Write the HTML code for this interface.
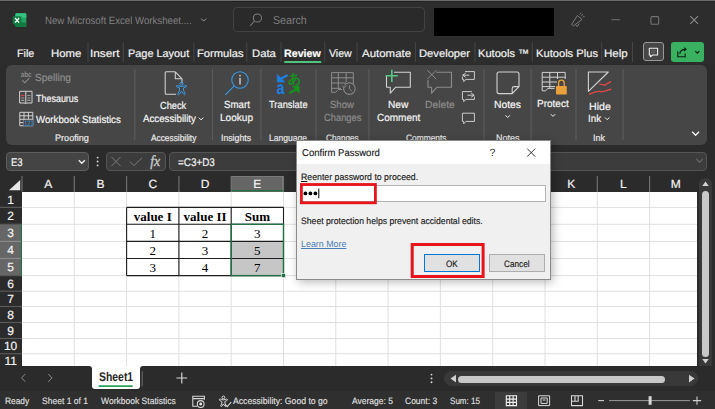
<!DOCTYPE html><html><head><meta charset="utf-8"><style>*{margin:0;padding:0;box-sizing:border-box}html,body{width:715px;height:409px;overflow:hidden;background:#2b2b2b}.a{position:absolute;white-space:nowrap}</style></head><body>
<div class="a" style="left:0px;top:0px;width:715px;height:64px;background:#2d2d2d;"></div>
<div class="a" style="left:0px;top:0px;width:715px;height:1px;background:#6b6b6b;"></div>
<div class="a" style="left:0px;top:1px;width:715px;height:1px;background:#222;"></div>
<div class="a" style="left:233px;top:7px;width:192px;height:25px;background:#2a2a2a;border:1px solid #424242;border-radius:4px"></div>
<div class="a" style="left:434px;top:8px;width:120px;height:28px;background:#000;"></div>
<div class="a" style="left:643px;top:42px;width:21.2px;height:19.4px;background:#474747;border:1px solid #9a9a9a;border-radius:3px"></div>
<div class="a" style="left:670.5px;top:42.2px;width:33.7px;height:20px;background:#3ab061;border-radius:3px"></div>
<div class="a" style="left:6px;top:65px;width:701px;height:80px;background:#464646;border-radius:6px"></div>
<div class="a" style="left:6.2px;top:151.5px;width:83.3px;height:19.3px;background:#444;border:1px solid #5e5e5e;border-radius:4px"></div>
<div class="a" style="left:106.4px;top:151.5px;width:59.5px;height:19.3px;background:#3c3c3c;border:1px solid #555;border-radius:4px"></div>
<div class="a" style="left:169.4px;top:151.5px;width:537.6px;height:19.3px;background:#3c3c3c;border:1px solid #555;border-radius:4px"></div>
<div class="a" style="left:0px;top:176px;width:697px;height:15.5px;background:#2b2b2b;"></div>
<div class="a" style="left:231.2px;top:176px;width:52.3px;height:15.5px;background:#666;border:1px solid #7a7a7a;border-bottom:none"></div>
<div class="a" style="left:22px;top:191.5px;width:675px;height:175px;background:#fff;"></div>
<div class="a" style="left:697px;top:176px;width:18px;height:190px;background:#2b2b2b;"></div>
<div class="a" style="left:699px;top:178px;width:13px;height:188px;background:#393939;border-radius:6px 6px 0 0"></div>
<div class="a" style="left:701.8px;top:190.5px;width:7.5px;height:166px;background:#c8c8c8;border-radius:4px"></div>
<div class="a" style="left:0px;top:366px;width:715px;height:25.4px;background:#2b2b2b;"></div>
<div class="a" style="left:85px;top:366px;width:60px;height:4px;background:#fff;"></div>
<div class="a" style="left:0px;top:366px;width:91.75px;height:25.4px;background:#2b2b2b;border-top-right-radius:3px"></div>
<div class="a" style="left:139.7px;top:366px;width:575.3px;height:25.4px;background:#2b2b2b;border-top-left-radius:3px"></div>
<div class="a" style="left:91.75px;top:366px;width:47.95px;height:22.9px;background:#fff;border-radius:0 0 3px 3px"></div>
<div class="a" style="left:0px;top:391.4px;width:715px;height:17.6px;background:#2f2f2f;"></div>
<div class="a" style="left:444px;top:371px;width:254px;height:15px;background:#393939;border-radius:7.5px"></div>
<div class="a" style="left:458px;top:375.5px;width:207px;height:7px;background:#c8c8c8;border-radius:3.5px"></div>
<div class="a" style="left:494.8px;top:392px;width:32.7px;height:17px;background:#3c3c3c;"></div>
<svg class="a" style="left:0;top:0" width="715" height="409" viewBox="0 0 715 409" fill="none"><rect x="15.4" y="13.2" width="10.9" height="13.8" rx="1.3" fill="#21a366"/><path d="M15.4 14.5 A1.3 1.3 0 0 1 16.7 13.2 H25 A1.3 1.3 0 0 1 26.3 14.5 V17.8 H15.4 Z" fill="#33c481"/><path d="M15.4 22.4 H26.3 V25.7 A1.3 1.3 0 0 1 25 27 H16.7 A1.3 1.3 0 0 1 15.4 25.7 Z" fill="#107c41"/><rect x="12.8" y="16.2" width="8.6" height="8.2" rx="1" fill="#107c41"/><path d="M15.1 18 L19.1 22.6 M19.1 18 L15.1 22.6" stroke="#fff" stroke-width="1.3"/><path d="M201.2 18.6 L203.7 21.1 L206.2 18.6" stroke="#9a9a9a" stroke-width="1"/><circle cx="257.4" cy="18" r="4.1" stroke="#7a7a7a" stroke-width="1.05"/><path d="M254.5 21 L250.2 25.8" stroke="#7a7a7a" stroke-width="1.1"/><path d="M571.5 24.5 L577.5 15.5 L582 19.5 L573.5 25.8 Z M575.7 24.7 L577.2 26.6 L579.2 23.6" stroke="#7a7a7a" stroke-width="1" stroke-linejoin="round"/><path d="M579.6 14.4 L581.4 12.6 M582.4 17.2 L584.6 16.6 M581.2 15.6 L583.2 14.4" stroke="#7a7a7a" stroke-width="0.9"/><path d="M611.4 19.7 H620" stroke="#6a6a6a" stroke-width="1.1"/><rect x="650.9" y="16.6" width="7.8" height="7.6" rx="1.3" stroke="#747474" stroke-width="1.1"/><path d="M690.3 16.2 L698 23.9 M698 16.2 L690.3 23.9" stroke="#8c8c8c" stroke-width="1.05"/><path d="M88.0 42 V62" stroke="#464646" stroke-width="1"/><path d="M123.3 42 V62" stroke="#464646" stroke-width="1"/><path d="M193.9 42 V62" stroke="#464646" stroke-width="1"/><path d="M246.8 42 V62" stroke="#464646" stroke-width="1"/><path d="M281.0 42 V62" stroke="#464646" stroke-width="1"/><path d="M324.7 42 V62" stroke="#464646" stroke-width="1"/><path d="M357.0 42 V62" stroke="#464646" stroke-width="1"/><path d="M415.4 42 V62" stroke="#464646" stroke-width="1"/><path d="M475.0 42 V62" stroke="#464646" stroke-width="1"/><path d="M532.3 42 V62" stroke="#464646" stroke-width="1"/><path d="M601.7 42 V62" stroke="#464646" stroke-width="1"/><path d="M632.5 42 V62" stroke="#464646" stroke-width="1"/><path d="M285 62 H320.5" stroke="#4fc27d" stroke-width="2" stroke-linecap="round"/><path d="M649.3 48.2 H657.6 V55 H652.6 L650.4 56.8 V55 H649.3 Z" stroke="#f0f0f0" stroke-width="1.05" stroke-linejoin="round"/><path d="M651 50.8 H656 M651 52.6 H655" stroke="#777" stroke-width="0.6"/><path d="M677.8 51.3 V56.7 H685.2 V53.6" stroke="#0d1f12" stroke-width="1.15"/><path d="M679.8 54 C680 50.8 682 49.3 685.5 49.3 M684 47.6 L686 49.3 L684 51" stroke="#0d1f12" stroke-width="1.15"/><path d="M695.3 51.2 L697.3 53.2 L699.3 51.2" stroke="#0d1f12" stroke-width="1.2"/><path d="M134.8 69 V140" stroke="#5e5e5e" stroke-width="1"/><path d="M212.4 69 V140" stroke="#5e5e5e" stroke-width="1"/><path d="M261.0 69 V140" stroke="#5e5e5e" stroke-width="1"/><path d="M316.0 69 V140" stroke="#5e5e5e" stroke-width="1"/><path d="M369.0 69 V140" stroke="#5e5e5e" stroke-width="1"/><path d="M484.0 69 V140" stroke="#5e5e5e" stroke-width="1"/><path d="M531.0 69 V140" stroke="#5e5e5e" stroke-width="1"/><path d="M576.0 69 V140" stroke="#5e5e5e" stroke-width="1"/><path d="M623.0 69 V140" stroke="#5e5e5e" stroke-width="1"/><text transform="translate(20.8 76.6) scale(0.8 1)" font-family="Liberation Sans" font-weight="bold" font-size="7.8" fill="#8c8c8c" text-rendering="geometricPrecision">abc</text><path d="M22.3 80.2 L24.7 82.8 L29.3 78.2" stroke="#8c8c8c" stroke-width="1.05"/><path d="M19.6 91.3 H32 V103 H26.6 L25.8 103.9 L25 103 H19.6 Z M25.8 91.3 V103" stroke="#d2d2d2" stroke-width="1" stroke-linejoin="round"/><path d="M21.2 95.5 H24.3" stroke="#e04848" stroke-width="1.3"/><path d="M21.2 98 H24.3 M21.2 100.4 H24.3 M27.3 95.5 H30.4 M27.3 98 H30.4 M27.3 100.4 H30.4" stroke="#9a9a9a" stroke-width="1.1"/><path d="M19.8 112.3 H32.8 V125.8 H19.8 Z M19.8 115.8 H32.8 M19.8 119.3 H32.8 M19.8 122.6 H23.5 M24 112.3 V125.8 M28.4 112.3 V119.3" stroke="#d2d2d2" stroke-width="1"/><rect x="23.6" y="119.9" width="9.6" height="6.2" fill="#464646"/><text transform="translate(24.2 126) scale(0.7 1)" font-family="Liberation Sans" font-size="8" fill="#3a9be6" text-rendering="geometricPrecision">123</text><path d="M175.3 71.8 H166.2 A1 1 0 0 0 165.2 72.8 V93.3 A1 1 0 0 0 166.2 94.3 H176 M175.3 71.8 L182 78.8 V83.5 M175.3 71.8 V78.8 H182" stroke="#d2d2d2" stroke-width="1.05" stroke-linejoin="round"/><circle cx="181.5" cy="83.7" r="1.6" stroke="#3a9be6" stroke-width="1"/><path d="M176.5 86.6 C176.1 85.7 176.8 85.3 177.6 85.6 L180.2 86.4 H182.8 L185.4 85.6 C186.2 85.3 186.9 85.7 186.5 86.6 L183.5 88 V90.4 L185.2 93.8 C185.5 94.7 184.5 95.2 184 94.5 L181.5 91.4 L179 94.5 C178.5 95.2 177.5 94.7 177.8 93.8 L179.5 90.4 V88 Z" stroke="#3a9be6" stroke-width="1" stroke-linejoin="round"/><circle cx="240" cy="80" r="8.2" stroke="#3a9be6" stroke-width="1.05"/><path d="M234.3 85.8 L225.3 94.8" stroke="#3a9be6" stroke-width="1.1"/><circle cx="240" cy="75.6" r="0.9" fill="#c8c8c8"/><path d="M240 77.8 V84.5" stroke="#c8c8c8" stroke-width="1.5"/><path d="M277.2 74.4 V82 H284.8 Z" fill="#1e7fe0" stroke="#1e7fe0" stroke-width="0.6" stroke-linejoin="round"/><path d="M279.6 79.6 L286.8 75.6" stroke="#1e7fe0" stroke-width="2.3" stroke-linecap="round"/><text transform="translate(276.4 94.2) scale(0.8 1)" x="0" y="0" font-family="Liberation Sans" font-weight="bold" font-size="18" fill="#1e7fe0" text-rendering="geometricPrecision">a</text><text x="287.6" y="82.8" font-family="Liberation Sans" font-weight="bold" font-size="12.8" fill="#16911e">あ</text><path d="M292.2 86.1 H299.2 V93.3 Z" fill="#16911e" stroke="#16911e" stroke-width="0.6" stroke-linejoin="round"/><path d="M296.2 89.4 L290.4 92.6" stroke="#16911e" stroke-width="2.3" stroke-linecap="round"/><path d="M331.6 92.3 V72.6 H353.3 V84 M331.6 77.8 H353.3 M331.6 83 H346 M331.6 88.3 H341 M338.3 72.6 V89 M346.2 72.6 V82 M331.6 92.3 H335.5 L338.5 89.5 H342" stroke="#8c8c8c" stroke-width="1"/><circle cx="349.4" cy="88.6" r="5.8" stroke="#8c8c8c" stroke-width="1.05" fill="#464646"/><path d="M349.4 85.3 V88.8 L351.9 91.2" stroke="#8c8c8c" stroke-width="1"/><path d="M342.2 85.5 L344.2 87.8 L346.2 85.5" stroke="#8c8c8c" stroke-width="1" fill="#464646"/><path d="M386.5 75.6 V87.2 H390.3 V93.2 L395.8 87.2 H410.3 V72.2 H394" stroke="#d2d2d2" stroke-width="1.1" stroke-linejoin="round"/><path d="M391.8 69.8 V82 M385.6 75.8 H397.8" stroke="#56c785" stroke-width="1.6"/><path d="M428 80 V87.2 H431.6 V93.2 L437 87.2 H451.5 V72.2 H436.5" stroke="#8c8c8c" stroke-width="1.1" stroke-linejoin="round"/><path d="M427.3 70.2 L436.3 79.2 M436.3 70.2 L427.3 79.2" stroke="#8c8c8c" stroke-width="1"/><path d="M465 71.6 H474.4 V79.4 H466 L463.7 81.6 V79.4 H462.4 V76.6" stroke="#d2d2d2" stroke-width="0.95" stroke-linejoin="round"/><path d="M465.6 73.2 L462.6 75.2 L465.6 77.2 M462.8 75.2 H469.4" stroke="#d2d2d2" stroke-width="0.95"/><path d="M471.8 91.6 H462.4 V99.4 H463.7 V101.6 L466 99.4 H474.4 V96.6" stroke="#d2d2d2" stroke-width="0.95" stroke-linejoin="round"/><path d="M471.2 93.2 L474.2 95.2 L471.2 97.2 M474 95.2 H467.4" stroke="#d2d2d2" stroke-width="0.95"/><path d="M462.4 113.2 H474.4 V121.4 H466 L463.7 123.8 V121.4 H462.4 Z" stroke="#d2d2d2" stroke-width="0.95" stroke-linejoin="round"/><path d="M499 72 H517 A2 2 0 0 1 519 74 V86.6 L512.2 93.6 H499 A2 2 0 0 1 497 91.6 V74 A2 2 0 0 1 499 72 Z M519 86.6 H514 A1.8 1.8 0 0 0 512.2 88.4 V93.6" stroke="#d2d2d2" stroke-width="1.1" stroke-linejoin="round"/><path d="M542.2 90.8 V72.4 H565.2 V79 M542.2 77.2 H565.2 M542.2 82 H557 M542.2 86.6 H555 M549.8 72.4 V88 M557.5 72.4 V79 M542.2 90.8 H545.5 L548 88.4 H554.5" stroke="#d2d2d2" stroke-width="1"/><path d="M558.6 86.2 V83 A2.8 2.8 0 0 1 564.2 83 V86.2" stroke="#e9a23b" stroke-width="1.3" fill="#464646"/><rect x="556" y="86" width="10.8" height="8.6" rx="0.8" fill="#e9a23b"/><path d="M588.4 72 H608.3 L588.4 91.3 Z" stroke="#d2d2d2" stroke-width="1.1" stroke-linejoin="round"/><path d="M599.4 84.2 C602 83.5 603.5 85.8 605.5 84.8 C607.5 83.8 609 82.3 611.2 81.6 M589 94.2 C593.5 92.5 597.6 90.6 600.4 91.6 C603 92.6 606.5 90.2 611.2 89.2" stroke="#e04848" stroke-width="1.4"/><path d="M198.9 117.7 L201.1 119.9 L203.3 117.7" stroke="#f0f0f0" stroke-width="1"/><path d="M505.5 115.3 L507.7 117.5 L509.9 115.3" stroke="#f0f0f0" stroke-width="1"/><path d="M550.8 114.2 L553.0 116.4 L555.2 114.2" stroke="#f0f0f0" stroke-width="1"/><path d="M605.0 117.5 L607.2 119.7 L609.4 117.5" stroke="#f0f0f0" stroke-width="1"/><path d="M692.2 131.8 L695.6 135.2 L699 131.8" stroke="#f4f4f4" stroke-width="1.4"/><path d="M78.8 160.2 L81.8 163.2 L84.8 160.2" stroke="#f0f0f0" stroke-width="1.4"/><circle cx="97.6" cy="157.6" r="0.95" fill="#d8d8d8"/><circle cx="97.6" cy="161.5" r="0.95" fill="#d8d8d8"/><circle cx="97.6" cy="165.4" r="0.95" fill="#d8d8d8"/><path d="M111.5 157 L120.5 166 M120.5 157 L111.5 166" stroke="#7a7a7a" stroke-width="1"/><path d="M129.8 161.6 L134 165.6 L142 157.8" stroke="#7a7a7a" stroke-width="1"/><path d="M696.2 158.8 L699.6 162.2 L703 158.8" stroke="#6a6a6a" stroke-width="1.1"/><rect x="0" y="224.3" width="22" height="51.30000000000001" fill="#666"/><path d="M74.30 191.5 V366" stroke="#e0e0e0" stroke-width="1"/><path d="M74.30 176 V191.5" stroke="#6e6e6e" stroke-width="1.2"/><path d="M126.60 191.5 V366" stroke="#e0e0e0" stroke-width="1"/><path d="M126.60 176 V191.5" stroke="#6e6e6e" stroke-width="1.2"/><path d="M178.90 191.5 V366" stroke="#e0e0e0" stroke-width="1"/><path d="M178.90 176 V191.5" stroke="#6e6e6e" stroke-width="1.2"/><path d="M231.20 191.5 V366" stroke="#e0e0e0" stroke-width="1"/><path d="M231.20 176 V191.5" stroke="#6e6e6e" stroke-width="1.2"/><path d="M283.50 191.5 V366" stroke="#e0e0e0" stroke-width="1"/><path d="M283.50 176 V191.5" stroke="#6e6e6e" stroke-width="1.2"/><path d="M335.80 191.5 V366" stroke="#e0e0e0" stroke-width="1"/><path d="M335.80 176 V191.5" stroke="#6e6e6e" stroke-width="1.2"/><path d="M388.10 191.5 V366" stroke="#e0e0e0" stroke-width="1"/><path d="M388.10 176 V191.5" stroke="#6e6e6e" stroke-width="1.2"/><path d="M440.40 191.5 V366" stroke="#e0e0e0" stroke-width="1"/><path d="M440.40 176 V191.5" stroke="#6e6e6e" stroke-width="1.2"/><path d="M492.70 191.5 V366" stroke="#e0e0e0" stroke-width="1"/><path d="M492.70 176 V191.5" stroke="#6e6e6e" stroke-width="1.2"/><path d="M545.00 191.5 V366" stroke="#e0e0e0" stroke-width="1"/><path d="M545.00 176 V191.5" stroke="#6e6e6e" stroke-width="1.2"/><path d="M597.30 191.5 V366" stroke="#e0e0e0" stroke-width="1"/><path d="M597.30 176 V191.5" stroke="#6e6e6e" stroke-width="1.2"/><path d="M649.60 191.5 V366" stroke="#e0e0e0" stroke-width="1"/><path d="M649.60 176 V191.5" stroke="#6e6e6e" stroke-width="1.2"/><path d="M22 176 V191.5" stroke="#6e6e6e" stroke-width="1.2"/><path d="M22 207.4 H697" stroke="#e0e0e0" stroke-width="1"/><path d="M0 207.4 H22" stroke="#595959" stroke-width="1.2"/><path d="M22 224.3 H697" stroke="#e0e0e0" stroke-width="1"/><path d="M0 224.3 H22" stroke="#595959" stroke-width="1.2"/><path d="M22 241.4 H697" stroke="#e0e0e0" stroke-width="1"/><path d="M0 241.4 H22" stroke="#8a8a8a" stroke-width="1.2"/><path d="M22 258.5 H697" stroke="#e0e0e0" stroke-width="1"/><path d="M0 258.5 H22" stroke="#8a8a8a" stroke-width="1.2"/><path d="M22 275.6 H697" stroke="#e0e0e0" stroke-width="1"/><path d="M0 275.6 H22" stroke="#595959" stroke-width="1.2"/><path d="M22 291.2 H697" stroke="#e0e0e0" stroke-width="1"/><path d="M0 291.2 H22" stroke="#595959" stroke-width="1.2"/><path d="M22 306.5 H697" stroke="#e0e0e0" stroke-width="1"/><path d="M0 306.5 H22" stroke="#595959" stroke-width="1.2"/><path d="M22 322.5 H697" stroke="#e0e0e0" stroke-width="1"/><path d="M0 322.5 H22" stroke="#595959" stroke-width="1.2"/><path d="M22 338.5 H697" stroke="#e0e0e0" stroke-width="1"/><path d="M0 338.5 H22" stroke="#595959" stroke-width="1.2"/><path d="M22 353.7 H697" stroke="#e0e0e0" stroke-width="1"/><path d="M0 353.7 H22" stroke="#595959" stroke-width="1.2"/><path d="M9 190.2 L20.2 180 V190.2 Z" fill="#e8e8e8"/><path d="M231.20 190.6 H283.50" stroke="#217346" stroke-width="1.2"/><path d="M21.4 224.3 V275.6" stroke="#217346" stroke-width="1.2"/><rect x="231.2" y="241.4" width="52.3" height="34.20000000000002" fill="#c6c6c6"/><path d="M126.60 207.4 V275.6" stroke="#1e1e1e" stroke-width="1.1"/><path d="M178.90 207.4 V275.6" stroke="#1e1e1e" stroke-width="1.1"/><path d="M231.20 207.4 V275.6" stroke="#1e1e1e" stroke-width="1.1"/><path d="M283.50 207.4 V275.6" stroke="#1e1e1e" stroke-width="1.1"/><path d="M126.60 207.4 H283.50" stroke="#1e1e1e" stroke-width="1.1"/><path d="M126.60 224.3 H283.50" stroke="#1e1e1e" stroke-width="1.1"/><path d="M126.60 241.4 H283.50" stroke="#1e1e1e" stroke-width="1.1"/><path d="M126.60 258.5 H283.50" stroke="#1e1e1e" stroke-width="1.1"/><path d="M126.60 275.6 H283.50" stroke="#1e1e1e" stroke-width="1.1"/><rect x="231.2" y="224.3" width="52.3" height="51.30000000000001" stroke="#217346" stroke-width="1.4"/><rect x="281.5" y="273.6" width="4" height="4" fill="#217346" stroke="#fff" stroke-width="0.6"/><path d="M702.2 186 L705.5 181.6 L708.8 186 Z" fill="#d0d0d0"/><path d="M702.2 359 L705.5 363.4 L708.8 359 Z" fill="#d0d0d0"/><path d="M25.3 374 L21.6 377.9 L25.3 381.8 M48.3 374 L52 377.9 L48.3 381.8" stroke="#8a8a8a" stroke-width="1"/><path d="M99.3 386.2 H132 " stroke="#2e9e5b" stroke-width="1.8" stroke-linecap="round"/><path d="M142.2 371.3 V386.4" stroke="#6e6e6e" stroke-width="1"/><path d="M181.8 372.6 V383.4 M176.4 378 H187.2" stroke="#d8d8d8" stroke-width="1.15"/><circle cx="431.5" cy="374.6" r="0.95" fill="#d8d8d8"/><circle cx="431.5" cy="378.4" r="0.95" fill="#d8d8d8"/><circle cx="431.5" cy="382.2" r="0.95" fill="#d8d8d8"/><path d="M456 374.8 L450.5 378.6 L456 382.4 Z" fill="#d0d0d0"/><path d="M689 374.8 L694.5 378.6 L689 382.4 Z" fill="#d0d0d0"/><path d="M197 406.3 H192.8 V396.3 H204.4 V399.8 M192.8 398.6 H204.4" stroke="#d8d8d8" stroke-width="1.05"/><circle cx="200.7" cy="404" r="3.4" stroke="#d8d8d8" stroke-width="1.05" fill="#2f2f2f"/><circle cx="200.7" cy="404" r="1.4" fill="#ececec"/><circle cx="223.4" cy="397.4" r="1.4" stroke="#d8d8d8" stroke-width="1"/><path d="M219.2 399.6 C219.6 398.6 220.8 399.3 223.4 399.9 C226 399.3 227.2 398.6 227.6 399.6 C227.8 400.3 226.2 400.9 224.9 401.4 V403 L226 405.6 C226.3 406.5 225.3 406.9 224.8 406.1 L223.4 403.9 L222 406.1 C221.5 406.9 220.5 406.5 220.8 405.6 L221.9 403 V401.4 C220.6 400.9 219 400.3 219.2 399.6 Z" stroke="#d8d8d8" stroke-width="1" stroke-linejoin="round"/><path d="M225.4 404.6 L227.2 406.6 L231.2 402.2" stroke="#d8d8d8" stroke-width="1.05"/><path d="M506.3 395.8 H516.5 V405.6 H506.3 Z M506.3 399.1 H516.5 M506.3 402.4 H516.5 M509.7 395.8 V405.6 M513.1 395.8 V405.6" stroke="#f0f0f0" stroke-width="1.1"/><path d="M538.6 395.8 H549.6 V405.6 H538.6 Z M541 398 H547.2 V403.4 H541 Z M542.6 400 H545.6" stroke="#d8d8d8" stroke-width="1"/><path d="M571.5 395.8 H582.5 V405.6 H571.5 Z M571.5 401.2 H578.2 V395.8 M575 395.8 V401.2" stroke="#d8d8d8" stroke-width="1.1"/><path d="M598.2 400.6 H604" stroke="#d0d0d0" stroke-width="1.1"/><path d="M609 400.6 H690" stroke="#9a9a9a" stroke-width="1"/><rect x="648.6" y="396.2" width="3" height="8.6" fill="#d8d8d8"/><path d="M697 396.4 V404.8 M692.8 400.6 H701.2" stroke="#d0d0d0" stroke-width="1.05"/></svg>
<div class="a" style="left:45.21px;top:15px;font:normal 10.5px/12.600px 'Liberation Sans',sans-serif;color:#808080;text-rendering:geometricPrecision;transform:scaleX(0.9185);transform-origin:0 0;">New Microsoft Excel Worksheet....</div>
<div class="a" style="left:273.12px;top:15px;font:normal 11.5px/13.800px 'Liberation Sans',sans-serif;color:#7e7e7e;text-rendering:geometricPrecision;transform:scaleX(0.9267);transform-origin:0 0;">Search</div>
<div class="a" style="left:16.92px;top:48px;font:normal 10.9px/13.080px 'Liberation Sans',sans-serif;color:#f2f2f2;text-rendering:geometricPrecision;-webkit-text-stroke:0.2px #f2f2f2;transform:scaleX(0.9823);transform-origin:0 0;">File</div>
<div class="a" style="left:51.06px;top:48px;font:normal 10.9px/13.080px 'Liberation Sans',sans-serif;color:#f2f2f2;text-rendering:geometricPrecision;-webkit-text-stroke:0.2px #f2f2f2;transform:scaleX(1.0470);transform-origin:0 0;">Home</div>
<div class="a" style="left:89.51px;top:48px;font:normal 10.9px/13.080px 'Liberation Sans',sans-serif;color:#f2f2f2;text-rendering:geometricPrecision;-webkit-text-stroke:0.2px #f2f2f2;transform:scaleX(1.0847);transform-origin:0 0;">Insert</div>
<div class="a" style="left:127.51px;top:48px;font:normal 10.9px/13.080px 'Liberation Sans',sans-serif;color:#f2f2f2;text-rendering:geometricPrecision;-webkit-text-stroke:0.2px #f2f2f2;transform:scaleX(1.0009);transform-origin:0 0;">Page Layout</div>
<div class="a" style="left:196.98px;top:48px;font:normal 10.9px/13.080px 'Liberation Sans',sans-serif;color:#f2f2f2;text-rendering:geometricPrecision;-webkit-text-stroke:0.2px #f2f2f2;transform:scaleX(1.0262);transform-origin:0 0;">Formulas</div>
<div class="a" style="left:251.57px;top:48px;font:normal 10.9px/13.080px 'Liberation Sans',sans-serif;color:#f2f2f2;text-rendering:geometricPrecision;-webkit-text-stroke:0.2px #f2f2f2;transform:scaleX(1.0389);transform-origin:0 0;">Data</div>
<div class="a" style="left:283.70px;top:48px;font:bold 10.9px/13.080px 'Liberation Sans',sans-serif;color:#ffffff;text-rendering:geometricPrecision;-webkit-text-stroke:0.2px #ffffff;transform:scaleX(0.9793);transform-origin:0 0;">Review</div>
<div class="a" style="left:329.26px;top:48px;font:normal 10.9px/13.080px 'Liberation Sans',sans-serif;color:#f2f2f2;text-rendering:geometricPrecision;-webkit-text-stroke:0.2px #f2f2f2;transform:scaleX(0.9695);transform-origin:0 0;">View</div>
<div class="a" style="left:361.98px;top:48px;font:normal 10.9px/13.080px 'Liberation Sans',sans-serif;color:#f2f2f2;text-rendering:geometricPrecision;-webkit-text-stroke:0.2px #f2f2f2;transform:scaleX(1.0531);transform-origin:0 0;">Automate</div>
<div class="a" style="left:419.08px;top:48px;font:normal 10.9px/13.080px 'Liberation Sans',sans-serif;color:#f2f2f2;text-rendering:geometricPrecision;-webkit-text-stroke:0.2px #f2f2f2;transform:scaleX(1.0285);transform-origin:0 0;">Developer</div>
<div class="a" style="left:478.09px;top:48px;font:normal 10.9px/13.080px 'Liberation Sans',sans-serif;color:#f2f2f2;text-rendering:geometricPrecision;-webkit-text-stroke:0.2px #f2f2f2;transform:scaleX(1.0173);transform-origin:0 0;">Kutools ™</div>
<div class="a" style="left:535.59px;top:48px;font:normal 10.9px/13.080px 'Liberation Sans',sans-serif;color:#f2f2f2;text-rendering:geometricPrecision;-webkit-text-stroke:0.2px #f2f2f2;transform:scaleX(1.0235);transform-origin:0 0;">Kutools Plus</div>
<div class="a" style="left:604.05px;top:48px;font:normal 10.9px/13.080px 'Liberation Sans',sans-serif;color:#f2f2f2;text-rendering:geometricPrecision;-webkit-text-stroke:0.2px #f2f2f2;transform:scaleX(1.0626);transform-origin:0 0;">Help</div>
<div class="a" style="left:35.34px;top:73px;font:normal 10.3px/12.360px 'Liberation Sans',sans-serif;color:#8c8c8c;text-rendering:geometricPrecision;-webkit-text-stroke:0.2px #8c8c8c;transform:scaleX(0.9824);transform-origin:0 0;">Spelling</div>
<div class="a" style="left:36.30px;top:94px;font:normal 10.3px/12.360px 'Liberation Sans',sans-serif;color:#f4f4f4;text-rendering:geometricPrecision;-webkit-text-stroke:0.2px #f4f4f4;transform:scaleX(0.8696);transform-origin:0 0;">Thesaurus</div>
<div class="a" style="left:36.46px;top:115px;font:normal 10.3px/12.360px 'Liberation Sans',sans-serif;color:#f4f4f4;text-rendering:geometricPrecision;-webkit-text-stroke:0.2px #f4f4f4;transform:scaleX(0.9395);transform-origin:0 0;">Workbook Statistics</div>
<div class="a" style="left:54.95px;top:133px;font:normal 9.3px/11.160px 'Liberation Sans',sans-serif;color:#e6e6e6;text-rendering:geometricPrecision;-webkit-text-stroke:0.2px #e6e6e6;transform:scaleX(0.9797);transform-origin:0 0;">Proofing</div>
<div class="a" style="left:150.88px;top:133px;font:normal 9.3px/11.160px 'Liberation Sans',sans-serif;color:#e6e6e6;text-rendering:geometricPrecision;-webkit-text-stroke:0.2px #e6e6e6;transform:scaleX(0.8951);transform-origin:0 0;">Accessibility</div>
<div class="a" style="left:221.40px;top:133px;font:normal 9.3px/11.160px 'Liberation Sans',sans-serif;color:#e6e6e6;text-rendering:geometricPrecision;-webkit-text-stroke:0.2px #e6e6e6;transform:scaleX(0.9366);transform-origin:0 0;">Insights</div>
<div class="a" style="left:269.10px;top:133px;font:normal 9.3px/11.160px 'Liberation Sans',sans-serif;color:#e6e6e6;text-rendering:geometricPrecision;-webkit-text-stroke:0.2px #e6e6e6;transform:scaleX(0.9178);transform-origin:0 0;">Language</div>
<div class="a" style="left:325.89px;top:133px;font:normal 9.3px/11.160px 'Liberation Sans',sans-serif;color:#e6e6e6;text-rendering:geometricPrecision;-webkit-text-stroke:0.2px #e6e6e6;transform:scaleX(0.8757);transform-origin:0 0;">Changes</div>
<div class="a" style="left:405.58px;top:133px;font:normal 9.3px/11.160px 'Liberation Sans',sans-serif;color:#e6e6e6;text-rendering:geometricPrecision;-webkit-text-stroke:0.2px #e6e6e6;transform:scaleX(0.9012);transform-origin:0 0;">Comments</div>
<div class="a" style="left:495.66px;top:133px;font:normal 9.3px/11.160px 'Liberation Sans',sans-serif;color:#e6e6e6;text-rendering:geometricPrecision;-webkit-text-stroke:0.2px #e6e6e6;transform:scaleX(0.9658);transform-origin:0 0;">Notes</div>
<div class="a" style="left:593.48px;top:133px;font:normal 9.3px/11.160px 'Liberation Sans',sans-serif;color:#e6e6e6;text-rendering:geometricPrecision;-webkit-text-stroke:0.2px #e6e6e6;transform:scaleX(0.9594);transform-origin:0 0;">Ink</div>
<div class="a" style="left:160.04px;top:101px;font:normal 10.3px/12.360px 'Liberation Sans',sans-serif;color:#f4f4f4;text-rendering:geometricPrecision;-webkit-text-stroke:0.2px #f4f4f4;transform:scaleX(0.8991);transform-origin:0 0;">Check</div>
<div class="a" style="left:142.78px;top:114px;font:normal 10.3px/12.360px 'Liberation Sans',sans-serif;color:#f4f4f4;text-rendering:geometricPrecision;-webkit-text-stroke:0.2px #f4f4f4;transform:scaleX(0.9438);transform-origin:0 0;">Accessibility</div>
<div class="a" style="left:223.66px;top:100px;font:normal 10.3px/12.360px 'Liberation Sans',sans-serif;color:#f4f4f4;text-rendering:geometricPrecision;-webkit-text-stroke:0.2px #f4f4f4;transform:scaleX(0.9430);transform-origin:0 0;">Smart</div>
<div class="a" style="left:220.37px;top:113px;font:normal 10.3px/12.360px 'Liberation Sans',sans-serif;color:#f4f4f4;text-rendering:geometricPrecision;-webkit-text-stroke:0.2px #f4f4f4;transform:scaleX(0.9776);transform-origin:0 0;">Lookup</div>
<div class="a" style="left:269.09px;top:100px;font:normal 10.3px/12.360px 'Liberation Sans',sans-serif;color:#f4f4f4;text-rendering:geometricPrecision;-webkit-text-stroke:0.2px #f4f4f4;transform:scaleX(0.9076);transform-origin:0 0;">Translate</div>
<div class="a" style="left:330.07px;top:100px;font:normal 10.3px/12.360px 'Liberation Sans',sans-serif;color:#8c8c8c;text-rendering:geometricPrecision;-webkit-text-stroke:0.2px #8c8c8c;transform:scaleX(0.9278);transform-origin:0 0;">Show</div>
<div class="a" style="left:323.63px;top:113px;font:normal 10.3px/12.360px 'Liberation Sans',sans-serif;color:#8c8c8c;text-rendering:geometricPrecision;-webkit-text-stroke:0.2px #8c8c8c;transform:scaleX(0.9072);transform-origin:0 0;">Changes</div>
<div class="a" style="left:387.97px;top:100px;font:normal 10.3px/12.360px 'Liberation Sans',sans-serif;color:#f4f4f4;text-rendering:geometricPrecision;-webkit-text-stroke:0.2px #f4f4f4;transform:scaleX(0.9855);transform-origin:0 0;">New</div>
<div class="a" style="left:376.50px;top:113px;font:normal 10.3px/12.360px 'Liberation Sans',sans-serif;color:#f4f4f4;text-rendering:geometricPrecision;-webkit-text-stroke:0.2px #f4f4f4;transform:scaleX(0.9713);transform-origin:0 0;">Comment</div>
<div class="a" style="left:424.55px;top:100px;font:normal 10.3px/12.360px 'Liberation Sans',sans-serif;color:#8c8c8c;text-rendering:geometricPrecision;-webkit-text-stroke:0.2px #8c8c8c;transform:scaleX(1.0011);transform-origin:0 0;">Delete</div>
<div class="a" style="left:493.85px;top:100px;font:normal 10.3px/12.360px 'Liberation Sans',sans-serif;color:#f4f4f4;text-rendering:geometricPrecision;-webkit-text-stroke:0.2px #f4f4f4;transform:scaleX(1.0044);transform-origin:0 0;">Notes</div>
<div class="a" style="left:536.88px;top:99px;font:normal 10.3px/12.360px 'Liberation Sans',sans-serif;color:#f4f4f4;text-rendering:geometricPrecision;-webkit-text-stroke:0.2px #f4f4f4;transform:scaleX(0.9712);transform-origin:0 0;">Protect</div>
<div class="a" style="left:588.53px;top:102px;font:normal 10.3px/12.360px 'Liberation Sans',sans-serif;color:#f4f4f4;text-rendering:geometricPrecision;-webkit-text-stroke:0.2px #f4f4f4;transform:scaleX(1.0357);transform-origin:0 0;">Hide</div>
<div class="a" style="left:588.10px;top:114px;font:normal 10.3px/12.360px 'Liberation Sans',sans-serif;color:#f4f4f4;text-rendering:geometricPrecision;-webkit-text-stroke:0.2px #f4f4f4;transform:scaleX(0.9521);transform-origin:0 0;">Ink</div>
<div class="a" style="left:11.22px;top:157px;font:normal 11.2px/13.440px 'Liberation Sans',sans-serif;color:#f2f2f2;text-rendering:geometricPrecision;-webkit-text-stroke:0.2px #f2f2f2;transform:scaleX(0.8538);transform-origin:0 0;">E3</div>
<div class="a" style="left:150.19px;top:154px;font:normal 13.8px/16.560px 'Liberation Serif',serif;color:#c8c8c8;-webkit-text-stroke:0.35px #c8c8c8"><i>fx</i></div>
<div class="a" style="left:178.32px;top:157px;font:normal 11.2px/13.440px 'Liberation Sans',sans-serif;color:#f2f2f2;text-rendering:geometricPrecision;-webkit-text-stroke:0.2px #f2f2f2;transform:scaleX(0.8847);transform-origin:0 0;">=C3+D3</div>
<div class="a" style="left:-51.85px;top:177px;width:200px;text-align:center;font:normal 12.0px/14.400px 'Liberation Sans',sans-serif;color:#f2f2f2;text-rendering:geometricPrecision;-webkit-text-stroke:0.2px #f2f2f2;">A</div>
<div class="a" style="left:0.45px;top:177px;width:200px;text-align:center;font:normal 12.0px/14.400px 'Liberation Sans',sans-serif;color:#f2f2f2;text-rendering:geometricPrecision;-webkit-text-stroke:0.2px #f2f2f2;">B</div>
<div class="a" style="left:52.75px;top:177px;width:200px;text-align:center;font:normal 12.0px/14.400px 'Liberation Sans',sans-serif;color:#f2f2f2;text-rendering:geometricPrecision;-webkit-text-stroke:0.2px #f2f2f2;">C</div>
<div class="a" style="left:105.05px;top:177px;width:200px;text-align:center;font:normal 12.0px/14.400px 'Liberation Sans',sans-serif;color:#f2f2f2;text-rendering:geometricPrecision;-webkit-text-stroke:0.2px #f2f2f2;">D</div>
<div class="a" style="left:157.35px;top:177px;width:200px;text-align:center;font:normal 12.0px/14.400px 'Liberation Sans',sans-serif;color:#f2f2f2;text-rendering:geometricPrecision;-webkit-text-stroke:0.2px #f2f2f2;">E</div>
<div class="a" style="left:209.65px;top:177px;width:200px;text-align:center;font:normal 12.0px/14.400px 'Liberation Sans',sans-serif;color:#f2f2f2;text-rendering:geometricPrecision;-webkit-text-stroke:0.2px #f2f2f2;">F</div>
<div class="a" style="left:261.95px;top:177px;width:200px;text-align:center;font:normal 12.0px/14.400px 'Liberation Sans',sans-serif;color:#f2f2f2;text-rendering:geometricPrecision;-webkit-text-stroke:0.2px #f2f2f2;">G</div>
<div class="a" style="left:314.25px;top:177px;width:200px;text-align:center;font:normal 12.0px/14.400px 'Liberation Sans',sans-serif;color:#f2f2f2;text-rendering:geometricPrecision;-webkit-text-stroke:0.2px #f2f2f2;">H</div>
<div class="a" style="left:366.55px;top:177px;width:200px;text-align:center;font:normal 12.0px/14.400px 'Liberation Sans',sans-serif;color:#f2f2f2;text-rendering:geometricPrecision;-webkit-text-stroke:0.2px #f2f2f2;">I</div>
<div class="a" style="left:418.85px;top:177px;width:200px;text-align:center;font:normal 12.0px/14.400px 'Liberation Sans',sans-serif;color:#f2f2f2;text-rendering:geometricPrecision;-webkit-text-stroke:0.2px #f2f2f2;">J</div>
<div class="a" style="left:471.15px;top:177px;width:200px;text-align:center;font:normal 12.0px/14.400px 'Liberation Sans',sans-serif;color:#f2f2f2;text-rendering:geometricPrecision;-webkit-text-stroke:0.2px #f2f2f2;">K</div>
<div class="a" style="left:523.45px;top:177px;width:200px;text-align:center;font:normal 12.0px/14.400px 'Liberation Sans',sans-serif;color:#f2f2f2;text-rendering:geometricPrecision;-webkit-text-stroke:0.2px #f2f2f2;">L</div>
<div class="a" style="left:575.75px;top:177px;width:200px;text-align:center;font:normal 12.0px/14.400px 'Liberation Sans',sans-serif;color:#f2f2f2;text-rendering:geometricPrecision;-webkit-text-stroke:0.2px #f2f2f2;">M</div>
<div class="a" style="left:-89.40px;top:193px;width:200px;text-align:center;font:normal 12.0px/14.400px 'Liberation Sans',sans-serif;color:#f2f2f2;text-rendering:geometricPrecision;-webkit-text-stroke:0.2px #f2f2f2;">1</div>
<div class="a" style="left:-89.40px;top:209px;width:200px;text-align:center;font:normal 12.0px/14.400px 'Liberation Sans',sans-serif;color:#f2f2f2;text-rendering:geometricPrecision;-webkit-text-stroke:0.2px #f2f2f2;">2</div>
<div class="a" style="left:-89.40px;top:226px;width:200px;text-align:center;font:normal 12.0px/14.400px 'Liberation Sans',sans-serif;color:#f2f2f2;text-rendering:geometricPrecision;-webkit-text-stroke:0.2px #f2f2f2;">3</div>
<div class="a" style="left:-89.40px;top:243px;width:200px;text-align:center;font:normal 12.0px/14.400px 'Liberation Sans',sans-serif;color:#f2f2f2;text-rendering:geometricPrecision;-webkit-text-stroke:0.2px #f2f2f2;">4</div>
<div class="a" style="left:-89.40px;top:260px;width:200px;text-align:center;font:normal 12.0px/14.400px 'Liberation Sans',sans-serif;color:#f2f2f2;text-rendering:geometricPrecision;-webkit-text-stroke:0.2px #f2f2f2;">5</div>
<div class="a" style="left:-89.40px;top:277px;width:200px;text-align:center;font:normal 12.0px/14.400px 'Liberation Sans',sans-serif;color:#f2f2f2;text-rendering:geometricPrecision;-webkit-text-stroke:0.2px #f2f2f2;">6</div>
<div class="a" style="left:-89.40px;top:292px;width:200px;text-align:center;font:normal 12.0px/14.400px 'Liberation Sans',sans-serif;color:#f2f2f2;text-rendering:geometricPrecision;-webkit-text-stroke:0.2px #f2f2f2;">7</div>
<div class="a" style="left:-89.40px;top:308px;width:200px;text-align:center;font:normal 12.0px/14.400px 'Liberation Sans',sans-serif;color:#f2f2f2;text-rendering:geometricPrecision;-webkit-text-stroke:0.2px #f2f2f2;">8</div>
<div class="a" style="left:-89.40px;top:324px;width:200px;text-align:center;font:normal 12.0px/14.400px 'Liberation Sans',sans-serif;color:#f2f2f2;text-rendering:geometricPrecision;-webkit-text-stroke:0.2px #f2f2f2;">9</div>
<div class="a" style="left:-89.40px;top:339px;width:200px;text-align:center;font:normal 12.0px/14.400px 'Liberation Sans',sans-serif;color:#f2f2f2;text-rendering:geometricPrecision;-webkit-text-stroke:0.2px #f2f2f2;">10</div>
<div class="a" style="left:-89.40px;top:354px;width:200px;text-align:center;font:normal 12.0px/14.400px 'Liberation Sans',sans-serif;color:#f2f2f2;text-rendering:geometricPrecision;-webkit-text-stroke:0.2px #f2f2f2;">11</div>
<div class="a" style="left:52.75px;top:209px;width:200px;text-align:center;font:bold 13px/15.600px 'Liberation Serif',serif;color:#000;">value I</div>
<div class="a" style="left:105.05px;top:209px;width:200px;text-align:center;font:bold 13px/15.600px 'Liberation Serif',serif;color:#000;">value II</div>
<div class="a" style="left:157.35px;top:209px;width:200px;text-align:center;font:bold 13px/15.600px 'Liberation Serif',serif;color:#000;">Sum</div>
<div class="a" style="left:52.75px;top:226px;width:200px;text-align:center;font:normal 13px/15.600px 'Liberation Serif',serif;color:#000;">1</div>
<div class="a" style="left:105.05px;top:226px;width:200px;text-align:center;font:normal 13px/15.600px 'Liberation Serif',serif;color:#000;">2</div>
<div class="a" style="left:157.35px;top:226px;width:200px;text-align:center;font:normal 13px/15.600px 'Liberation Serif',serif;color:#000;">3</div>
<div class="a" style="left:52.75px;top:243px;width:200px;text-align:center;font:normal 13px/15.600px 'Liberation Serif',serif;color:#000;">2</div>
<div class="a" style="left:105.05px;top:243px;width:200px;text-align:center;font:normal 13px/15.600px 'Liberation Serif',serif;color:#000;">3</div>
<div class="a" style="left:157.35px;top:243px;width:200px;text-align:center;font:normal 13px/15.600px 'Liberation Serif',serif;color:#000;">5</div>
<div class="a" style="left:52.75px;top:260px;width:200px;text-align:center;font:normal 13px/15.600px 'Liberation Serif',serif;color:#000;">3</div>
<div class="a" style="left:105.05px;top:260px;width:200px;text-align:center;font:normal 13px/15.600px 'Liberation Serif',serif;color:#000;">4</div>
<div class="a" style="left:157.35px;top:260px;width:200px;text-align:center;font:normal 13px/15.600px 'Liberation Serif',serif;color:#000;">7</div>
<div class="a" style="left:98.51px;top:370px;font:bold 12.6px/15.120px 'Liberation Sans',sans-serif;color:#262626;text-rendering:geometricPrecision;transform:scaleX(0.8271);transform-origin:0 0;-webkit-text-stroke:0px">Sheet1</div>
<div class="a" style="left:5.21px;top:396px;font:normal 9.2px/11.040px 'Liberation Sans',sans-serif;color:#dcdcdc;text-rendering:geometricPrecision;-webkit-text-stroke:0.2px #dcdcdc;transform:scaleX(0.9100);transform-origin:0 0;">Ready</div>
<div class="a" style="left:42.42px;top:396px;font:normal 9.2px/11.040px 'Liberation Sans',sans-serif;color:#dcdcdc;text-rendering:geometricPrecision;-webkit-text-stroke:0.2px #dcdcdc;transform:scaleX(0.9290);transform-origin:0 0;">Sheet 1 of 1</div>
<div class="a" style="left:100.97px;top:396px;font:normal 9.2px/11.040px 'Liberation Sans',sans-serif;color:#dcdcdc;text-rendering:geometricPrecision;-webkit-text-stroke:0.2px #dcdcdc;transform:scaleX(0.9284);transform-origin:0 0;">Workbook Statistics</div>
<div class="a" style="left:232.58px;top:396px;font:normal 9.2px/11.040px 'Liberation Sans',sans-serif;color:#dcdcdc;text-rendering:geometricPrecision;-webkit-text-stroke:0.2px #dcdcdc;transform:scaleX(0.9408);transform-origin:0 0;">Accessibility: Good to go</div>
<div class="a" style="left:352.08px;top:396px;font:normal 9.2px/11.040px 'Liberation Sans',sans-serif;color:#dcdcdc;text-rendering:geometricPrecision;-webkit-text-stroke:0.2px #dcdcdc;transform:scaleX(0.9242);transform-origin:0 0;">Average: 5</div>
<div class="a" style="left:405.47px;top:396px;font:normal 9.2px/11.040px 'Liberation Sans',sans-serif;color:#dcdcdc;text-rendering:geometricPrecision;-webkit-text-stroke:0.2px #dcdcdc;transform:scaleX(0.9257);transform-origin:0 0;">Count: 3</div>
<div class="a" style="left:450.14px;top:396px;font:normal 9.2px/11.040px 'Liberation Sans',sans-serif;color:#dcdcdc;text-rendering:geometricPrecision;-webkit-text-stroke:0.2px #dcdcdc;transform:scaleX(0.8784);transform-origin:0 0;">Sum: 15</div>
<div class="a" style="left:295.5px;top:140px;width:255px;height:139.5px;background:#f0f0f0;border:1px solid #8a8a8a;box-shadow:2px 2px 9px rgba(0,0,0,0.28)"></div>
<div class="a" style="left:296.5px;top:141px;width:253px;height:23.4px;background:#fff;"></div>
<div class="a" style="left:301.52px;top:148px;font:normal 9.9px/11.880px 'Liberation Sans',sans-serif;color:#1a1a1a;text-rendering:geometricPrecision;-webkit-text-stroke:0.15px #1a1a1a;transform:scaleX(0.9656);transform-origin:0 0;">Confirm Password</div>
<div class="a" style="left:392.50px;top:147px;width:200px;text-align:center;font:normal 10.5px/12.600px 'Liberation Sans',sans-serif;color:#333;text-rendering:geometricPrecision;">?</div>
<div class="a" style="left:301px;top:184.5px;width:244.7px;height:17.7px;background:#fff;border:1px solid #b4b4b4"></div>
<div class="a" style="left:300.58px;top:172px;font:normal 9.2px/11.040px 'Liberation Sans',sans-serif;color:#1a1a1a;text-rendering:geometricPrecision;-webkit-text-stroke:0.15px #1a1a1a;transform:scaleX(0.9518);transform-origin:0 0;"><u>R</u>eenter password to proceed.</div>
<div class="a" style="left:300.81px;top:216px;font:normal 9.2px/11.040px 'Liberation Sans',sans-serif;color:#1a1a1a;text-rendering:geometricPrecision;-webkit-text-stroke:0.15px #1a1a1a;transform:scaleX(0.9408);transform-origin:0 0;">Sheet protection helps prevent accidental edits.</div>
<div class="a" style="left:301.27px;top:239px;font:normal 9.2px/11.040px 'Liberation Sans',sans-serif;color:#4a7dbb;text-rendering:geometricPrecision;transform:scaleX(0.9675);transform-origin:0 0;"><u>Learn More</u></div>
<div class="a" style="left:424.2px;top:254px;width:55.7px;height:17.8px;background:#e1e1e1;border:1.5px solid #0078d7"></div>
<div class="a" style="left:446.42px;top:259px;font:normal 9.2px/11.040px 'Liberation Sans',sans-serif;color:#1a1a1a;text-rendering:geometricPrecision;-webkit-text-stroke:0.15px #1a1a1a;transform:scaleX(0.8777);transform-origin:0 0;">OK</div>
<div class="a" style="left:489px;top:254px;width:55.7px;height:17.8px;background:#e1e1e1;border:1px solid #adadad"></div>
<div class="a" style="left:504.09px;top:259px;font:normal 9.2px/11.040px 'Liberation Sans',sans-serif;color:#1a1a1a;text-rendering:geometricPrecision;-webkit-text-stroke:0.15px #1a1a1a;transform:scaleX(0.8922);transform-origin:0 0;">Cancel</div>
<svg class="a" style="left:0;top:0" width="715" height="409" viewBox="0 0 715 409" fill="none"><path d="M527.2 148.6 L535.2 156.6 M535.2 148.6 L527.2 156.6" stroke="#333" stroke-width="1"/><circle cx="305.4" cy="193.4" r="1.9" fill="#000"/><circle cx="310.4" cy="193.4" r="1.9" fill="#000"/><circle cx="315.4" cy="193.4" r="1.9" fill="#000"/><path d="M318.8 188.6 V198.2" stroke="#000" stroke-width="1"/><rect x="301.4" y="184.5" width="74" height="18.3" stroke="#e8141c" stroke-width="2.8"/><rect x="412.2" y="244.5" width="70.9" height="32" stroke="#e8141c" stroke-width="3"/></svg>
</body></html>
